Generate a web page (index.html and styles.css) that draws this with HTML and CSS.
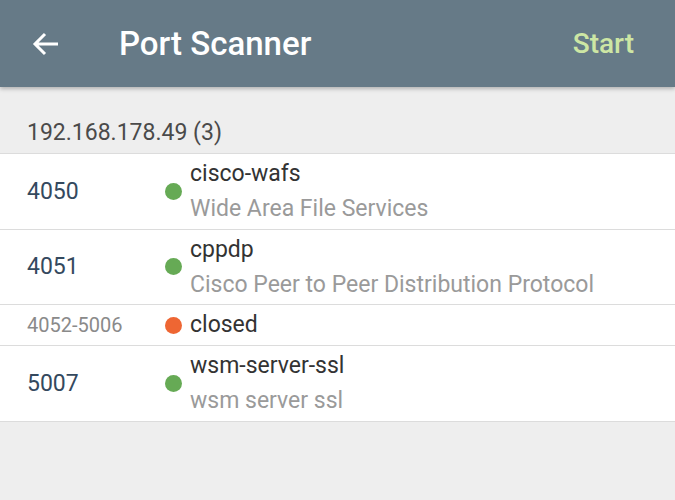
FILE: index.html
```html
<!doctype html>
<html lang="en">
    <head>
        <meta charset="utf-8">
        <title>Port Scanner</title>
        <link rel="stylesheet" href="styles.css">
    </head>
    <body>
        <div class="toolbar">
            <div class="toolbar__back">
                <svg width="28" height="24" viewBox="0 0 28 24">
                    <path d="M26 12H3M13 2L3 12l10 10" fill="none" stroke="#fff" stroke-width="3"/>
                </svg>
            </div>
            <div class="toolbar__title">Port Scanner</div>
            <div class="toolbar__action">Start</div>
        </div>

        <div class="host">192.168.178.49 (3)</div>

        <ul class="ports">
            <li class="port">
                <div class="port__number">4050</div>
                <span class="port__dot port__dot--open"></span>
                <div class="port__info">
                    <div class="port__name">cisco-wafs</div>
                    <div class="port__desc">Wide Area File Services</div>
                </div>
            </li>
            <li class="port">
                <div class="port__number">4051</div>
                <span class="port__dot port__dot--open"></span>
                <div class="port__info">
                    <div class="port__name">cppdp</div>
                    <div class="port__desc">Cisco Peer to Peer Distribution Protocol</div>
                </div>
            </li>
            <li class="port port--closed">
                <div class="port__number port__number--range">4052-5006</div>
                <span class="port__dot port__dot--closed"></span>
                <div class="port__info">
                    <div class="port__name">closed</div>
                </div>
            </li>
            <li class="port">
                <div class="port__number">5007</div>
                <span class="port__dot port__dot--open"></span>
                <div class="port__info">
                    <div class="port__name">wsm-server-ssl</div>
                    <div class="port__desc">wsm server ssl</div>
                </div>
            </li>
        </ul>
    </body>
</html>
```

FILE: styles.css
```css
body {
    background: #eeeeee;
    font-family: Roboto, "Noto Sans", sans-serif;
    margin: 0;
}

.toolbar {
    align-items: center;
    background: #667a87;
    box-shadow: 0 2px 4px rgba(0, 0, 0, 0.25);
    display: flex;
    height: 87px;
    position: relative;
}

.toolbar__back {
    display: flex;
    margin-left: 32px;
    width: 87px;
}

.toolbar__title {
    color: #fff;
    flex-grow: 1;
    font-size: 33px;
    font-weight: 500;
}

.toolbar__action {
    color: #cde6a4;
    font-size: 28px;
    font-weight: 500;
    margin-right: 41px;
}

.host {
    color: #4a4a4a;
    font-size: 23px;
    height: 34px;
    padding: 32px 27px 0;
}

.ports {
    background: #fff;
    border-top: 1px solid #dcdcdc;
    list-style: none;
    margin: 0;
    padding: 0;
}

.port {
    align-items: center;
    border-bottom: 1px solid #dcdcdc;
    display: flex;
    height: 74.5px;
}

.port--closed {
    height: 40px;
}

.port__number {
    color: #34495e;
    font-size: 23px;
    padding-left: 27px;
    width: 138px;
}

.port__number--range {
    color: #8a8a8a;
    font-size: 20px;
}

.port__dot {
    border-radius: 50%;
    height: 17px;
    margin-right: 8px;
    width: 17px;
}

.port__dot--open {
    background: #66aa55;
}

.port__dot--closed {
    background: #ee6633;
}

.port__name {
    color: #333;
    font-size: 23px;
    line-height: 36px;
}

.port--closed .port__name {
    line-height: 30px;
}

.port__desc {
    color: #9a9a9a;
    font-size: 23px;
    line-height: 34px;
}
```
